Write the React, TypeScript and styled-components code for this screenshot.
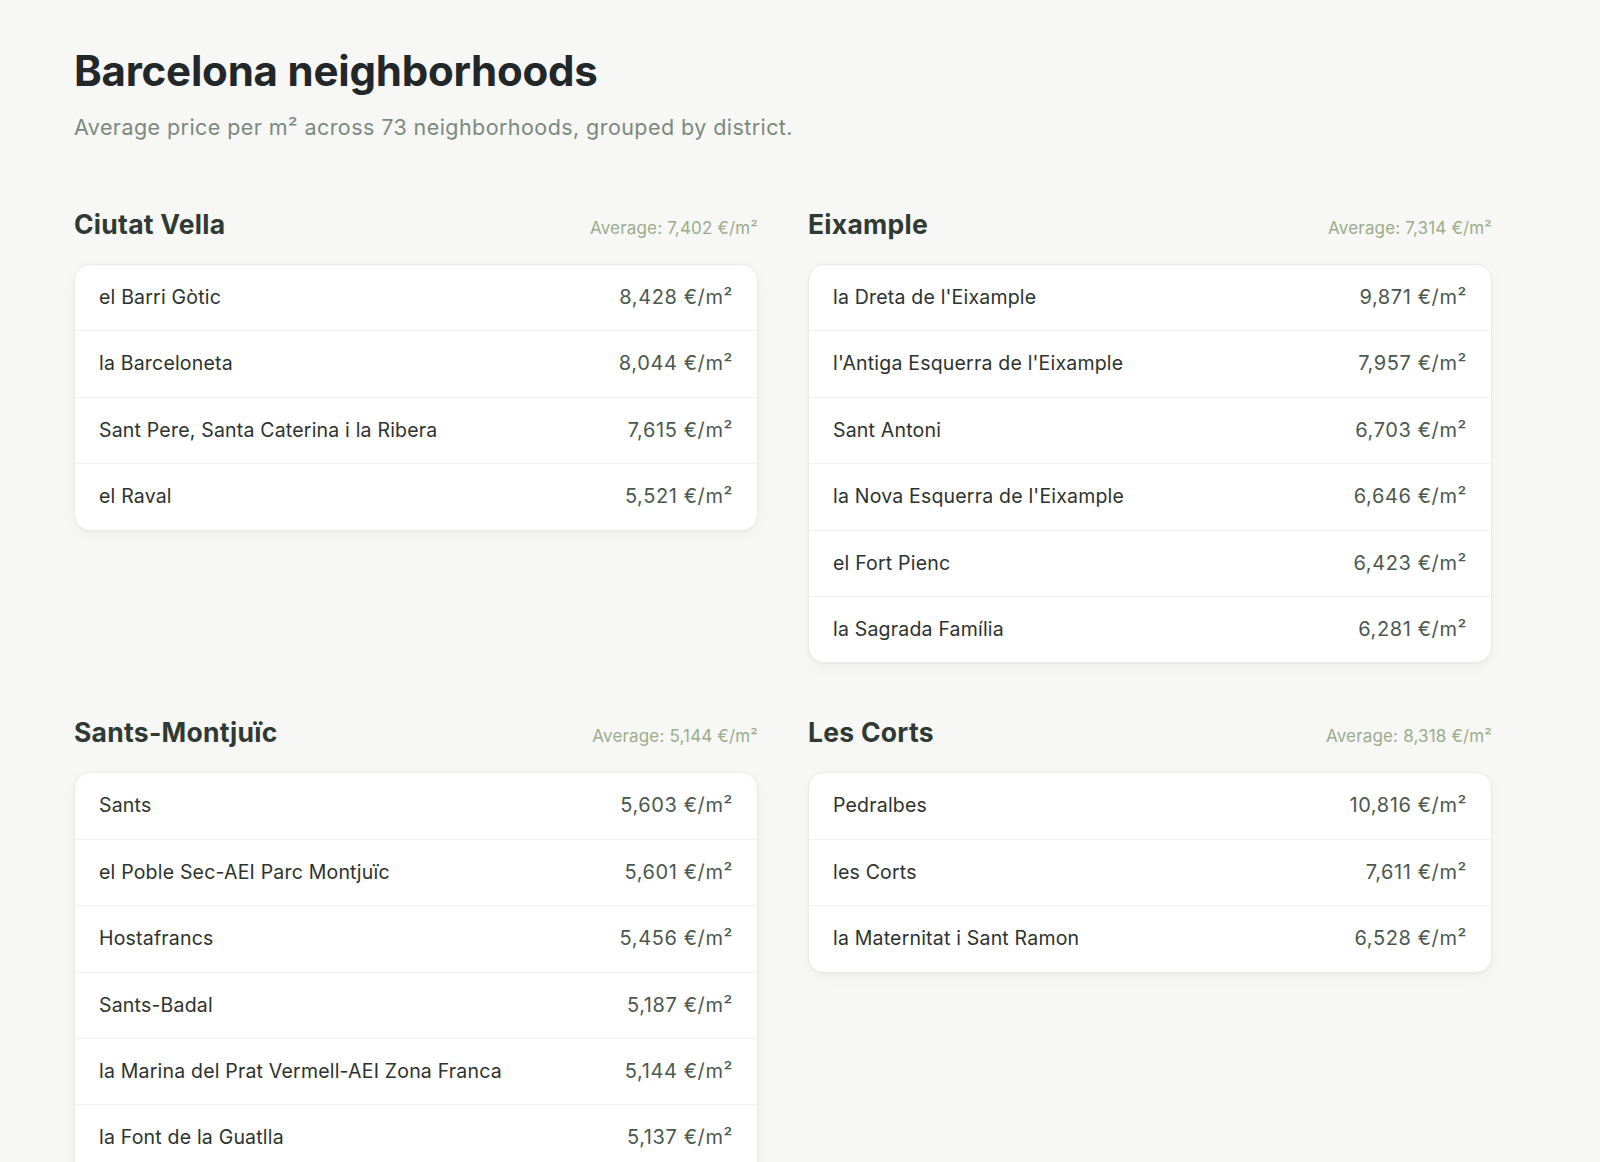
import React from "react";
import styled, { createGlobalStyle } from "styled-components";

const GlobalStyle = createGlobalStyle`
  html, body {
    margin: 0;
    padding: 0;
    background: #f7f7f5;
  }
  body {
    font-family: Inter, "Noto Sans", "Liberation Sans", sans-serif;
    -webkit-font-smoothing: antialiased;
  }
  * { box-sizing: border-box; }
`;

const Page = styled.main`
  padding: 46px 108px 60px 74px;
  min-height: 100vh;
`;

const Title = styled.h1`
  margin: 0;
  font-size: 42px;
  line-height: 50px;
  font-weight: 700;
  letter-spacing: -0.005em;
  color: #222729;
`;

const Subtitle = styled.p`
  margin: 17px 0 0;
  font-size: 21.5px;
  line-height: 28px;
  font-weight: 400;
  color: #7c897f;
  letter-spacing: 0.02em;
`;

const Grid = styled.div`
  margin-top: 67px;
  display: grid;
  grid-template-columns: 684px 684px;
  column-gap: 50px;
  row-gap: 53px;
  align-items: start;
`;

const Section = styled.section`
  display: flex;
  flex-direction: column;
`;

const SectionHeader = styled.div`
  display: flex;
  align-items: baseline;
  justify-content: space-between;
  margin-bottom: 24px;
`;

const DistrictName = styled.h2`
  margin: 0;
  font-size: 26.5px;
  line-height: 32px;
  font-weight: 700;
  letter-spacing: 0.01em;
  color: #303a34;
`;

const Average = styled.span`
  font-size: 17px;
  line-height: 20px;
  letter-spacing: 0.01em;
  color: #9aad8d;
`;

const Card = styled.ul`
  margin: 0;
  padding: 0;
  list-style: none;
  background: #ffffff;
  border: 1px solid #e9ece8;
  border-radius: 16px;
  box-shadow: 0 1px 2px rgba(30, 40, 30, 0.04), 0 4px 14px rgba(30, 40, 30, 0.04);
  overflow: hidden;
`;

const Row = styled.li`
  display: flex;
  justify-content: space-between;
  align-items: baseline;
  padding: 20px 24px;
  font-size: 19.5px;
  line-height: 25.4px;
  & + & {
    border-top: 1px solid #f0f2ef;
  }
`;

const Name = styled.span`
  color: #2c322e;
  letter-spacing: 0.01em;
`;

const Price = styled.span`
  color: #4b584f;
  font-size: 20px;
  font-weight: 400;
  letter-spacing: 0.03em;
`;

type District = {
  name: string;
  average: string;
  items: [string, string][];
};

const districts: District[] = [
  {
    name: "Ciutat Vella",
    average: "7,402",
    items: [
      ["el Barri Gòtic", "8,428"],
      ["la Barceloneta", "8,044"],
      ["Sant Pere, Santa Caterina i la Ribera", "7,615"],
      ["el Raval", "5,521"],
    ],
  },
  {
    name: "Eixample",
    average: "7,314",
    items: [
      ["la Dreta de l'Eixample", "9,871"],
      ["l'Antiga Esquerra de l'Eixample", "7,957"],
      ["Sant Antoni", "6,703"],
      ["la Nova Esquerra de l'Eixample", "6,646"],
      ["el Fort Pienc", "6,423"],
      ["la Sagrada Família", "6,281"],
    ],
  },
  {
    name: "Sants-Montjuïc",
    average: "5,144",
    items: [
      ["Sants", "5,603"],
      ["el Poble Sec-AEI Parc Montjuïc", "5,601"],
      ["Hostafrancs", "5,456"],
      ["Sants-Badal", "5,187"],
      ["la Marina del Prat Vermell-AEI Zona Franca", "5,144"],
      ["la Font de la Guatlla", "5,137"],
      ["la Bordeta", "4,812"],
      ["la Marina de Port", "4,214"],
    ],
  },
  {
    name: "Les Corts",
    average: "8,318",
    items: [
      ["Pedralbes", "10,816"],
      ["les Corts", "7,611"],
      ["la Maternitat i Sant Ramon", "6,528"],
    ],
  },
];

export default function App() {
  return (
    <>
      <GlobalStyle />
      <Page>
        <Title>Barcelona neighborhoods</Title>
        <Subtitle>
          Average price per m² across 73 neighborhoods, grouped by district.
        </Subtitle>
        <Grid>
          {districts.map((d) => (
            <Section key={d.name}>
              <SectionHeader>
                <DistrictName>{d.name}</DistrictName>
                <Average>Average: {d.average} €/m²</Average>
              </SectionHeader>
              <Card>
                {d.items.map(([n, p]) => (
                  <Row key={n}>
                    <Name>{n}</Name>
                    <Price>{p} €/m²</Price>
                  </Row>
                ))}
              </Card>
            </Section>
          ))}
        </Grid>
      </Page>
    </>
  );
}
